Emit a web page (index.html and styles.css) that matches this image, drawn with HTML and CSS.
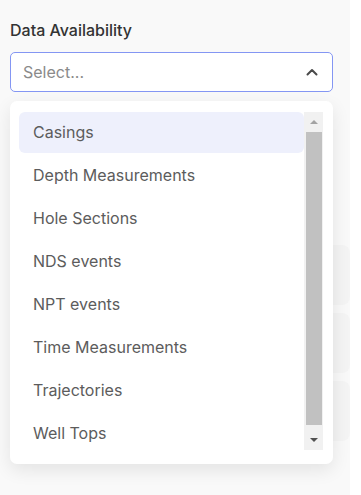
FILE: index.html
```html
<!DOCTYPE html>
<html>

<head>
    <meta charset="utf-8">
    <meta name="viewport" content="width=device-width">
    <link rel="stylesheet" href="styles.css">
</head>

<body>
    <div class="panel">
        <label class="field-label" for="availability">Data Availability</label>
        <div class="select" id="availability">
            <span class="placeholder">Select...</span>
            <svg class="chevron" width="12" height="8" viewBox="0 0 12 8">
                <path d="M1.5 6.5 L6 2 L10.5 6.5" fill="none" stroke="#4a4a4a" stroke-width="2" stroke-linecap="round" stroke-linejoin="round" />
            </svg>
        </div>
        <div class="rows">
            <div class="row"></div>
            <div class="row"></div>
            <div class="row"></div>
        </div>

        <div class="menu">
            <ul class="options">
                <li class="option active"><span>Casings</span></li>
                <li class="option"><span>Depth Measurements</span></li>
                <li class="option"><span>Hole Sections</span></li>
                <li class="option"><span>NDS events</span></li>
                <li class="option"><span>NPT events</span></li>
                <li class="option"><span>Time Measurements</span></li>
                <li class="option"><span>Trajectories</span></li>
                <li class="option"><span>Well Tops</span></li>
            </ul>
            <div class="scrollbar">
                <div class="scroll-btn"><span class="arrow up"></span></div>
                <div class="thumb"></div>
                <div class="scroll-btn"><span class="arrow down"></span></div>
            </div>
        </div>
    </div>
</body>

</html>
```

FILE: styles.css
```css
body {
    margin: 0;
    background: #ffffff;
    font-family: Inter, "Noto Sans", sans-serif;
}

.panel {
    position: relative;
    width: 350px;
    min-height: 495px;
    box-sizing: border-box;
    padding: 20px 17px 0 10px;
    background: #f9f9f9;
}

.field-label {
    display: block;
    font-size: 16px;
    font-weight: 500;
    line-height: 20px;
    color: #333333;
    margin-bottom: 12px;
}

.select {
    height: 40px;
    box-sizing: border-box;
    display: flex;
    align-items: center;
    justify-content: space-between;
    padding: 0 14px 0 12px;
    border: 1px solid #8496f3;
    border-radius: 5px;
    background: #ffffff;
}

.placeholder {
    font-size: 16px;
    color: #8a8a8a;
}

.rows {
    display: flex;
    flex-direction: column;
    gap: 8px;
    margin-top: 153px;
    margin-right: -17px;
}

.row {
    height: 60px;
    border-radius: 8px;
    background: #f4f4f4;
}

.menu {
    position: absolute;
    top: 101px;
    left: 10px;
    width: 323px;
    height: 363px;
    box-sizing: border-box;
    display: flex;
    padding: 9px 10px 14px 9px;
    background: #ffffff;
    border-radius: 7px;
    box-shadow: 0 6px 18px rgba(0, 0, 0, 0.09);
}

.options {
    flex: 1;
    margin: 0;
    padding: 0;
    list-style: none;
}

.option {
    height: 43px;
    box-sizing: border-box;
    padding-top: 2px;
}

.option span {
    height: 41px;
    box-sizing: border-box;
    display: flex;
    align-items: center;
    padding: 0 0 2px 14px;
    font-size: 16px;
    color: #5c5c5c;
    border-radius: 6px;
}

.option.active span {
    background: #eef0fc;
}

.scrollbar {
    width: 19px;
    display: flex;
    flex-direction: column;
    margin-top: 2px;
    background: #f1f1f1;
}

.scroll-btn {
    height: 20px;
    display: flex;
    align-items: center;
    justify-content: center;
}

.thumb {
    flex: 1;
    margin: 0 1px 5px 2px;
    background: #c1c1c1;
}

.arrow {
    width: 0;
    height: 0;
    border-left: 4px solid transparent;
    border-right: 4px solid transparent;
}

.arrow.up {
    border-bottom: 4px solid #a3a3a3;
}

.arrow.down {
    border-top: 4px solid #505050;
}
```
